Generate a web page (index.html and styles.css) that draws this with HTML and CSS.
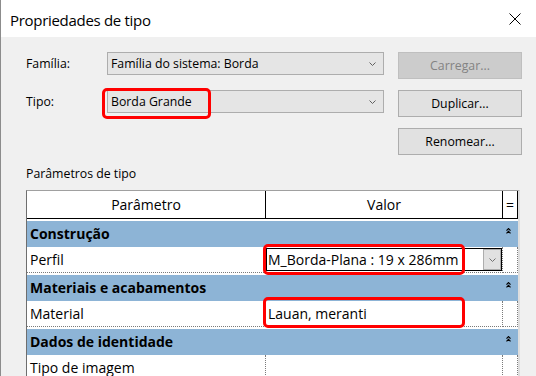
FILE: index.html
```html
<!DOCTYPE html>
<html lang="pt">
<head>
<meta charset="utf-8">
<title>Propriedades de tipo</title>
<link rel="stylesheet" href="styles.css">
</head>
<body>
<div class="window">
  <div class="titlebar">
    <span class="title">Propriedades de tipo</span>
    <svg class="close" width="12" height="12" viewBox="0 0 12 12"><path d="M0.5 0.5 L11.5 11.5 M11.5 0.5 L0.5 11.5" stroke="#000" stroke-width="1" fill="none"/></svg>
  </div>
  <div class="content">
    <div class="form">
      <div class="label">Família:</div>
      <div class="combo"><span>Família do sistema: Borda</span><svg class="chev" width="7" height="4" viewBox="0 0 7 4"><path d="M0.5 0.5 L3.5 3.5 L6.5 0.5" stroke="#606060" stroke-width="1" fill="none"/></svg></div>
      <button class="btn disabled">Carregar...</button>

      <div class="label">Tipo:</div>
      <div class="combo"><span>Borda Grande</span><svg class="chev" width="7" height="4" viewBox="0 0 7 4"><path d="M0.5 0.5 L3.5 3.5 L6.5 0.5" stroke="#606060" stroke-width="1" fill="none"/></svg><div class="mark mark-tipo"></div></div>
      <button class="btn">Duplicar...</button>

      <div class="spacer"></div>
      <div class="spacer"></div>
      <button class="btn">Renomear...</button>
    </div>

    <div class="section">Parâmetros de tipo</div>

    <div class="grid">
      <div class="hdr">
        <div>Parâmetro</div>
        <div>Valor</div>
        <div>=</div>
      </div>

      <div class="cat"><span>Construção</span><svg width="5" height="6" viewBox="0 0 5 6"><path d="M0.5 2.6 L2.5 0.6 L4.5 2.6 M0.5 5.4 L2.5 3.4 L4.5 5.4" stroke="#000" stroke-width="1.2" fill="none"/></svg></div>
      <div class="row">
        <div class="cell name">Perfil</div>
        <div class="cell val">
          <div class="vcombo"><span>M_Borda-Plana : 19 x 286mm</span><div class="vbtn"><svg width="7" height="4" viewBox="0 0 7 4"><path d="M0.5 0.5 L3.5 3.5 L6.5 0.5" stroke="#707070" stroke-width="1" fill="none"/></svg></div></div>
          <div class="mark mark-perfil"></div>
        </div>
        <div class="cell eq"></div>
      </div>

      <div class="cat"><span>Materiais e acabamentos</span><svg width="5" height="6" viewBox="0 0 5 6"><path d="M0.5 2.6 L2.5 0.6 L4.5 2.6 M0.5 5.4 L2.5 3.4 L4.5 5.4" stroke="#000" stroke-width="1.2" fill="none"/></svg></div>
      <div class="row">
        <div class="cell name">Material</div>
        <div class="cell val text">Lauan, meranti<div class="mark mark-material"></div></div>
        <div class="cell eq"></div>
      </div>

      <div class="cat"><span>Dados de identidade</span><svg width="5" height="6" viewBox="0 0 5 6"><path d="M0.5 2.6 L2.5 0.6 L4.5 2.6 M0.5 5.4 L2.5 3.4 L4.5 5.4" stroke="#000" stroke-width="1.2" fill="none"/></svg></div>
      <div class="row">
        <div class="cell name">Tipo de imagem</div>
        <div class="cell val text"></div>
        <div class="cell eq"></div>
      </div>
    </div>
  </div>
</div>
</body>
</html>
```

FILE: styles.css
```css
html, body {
  margin: 0;
  padding: 0;
  background: #f0f0f0;
}

body {
  font-family: "Open Sans", "Noto Sans", "DejaVu Sans", sans-serif;
  color: #000;
}

.window {
  width: 536px;
  height: 376px;
  box-sizing: border-box;
  border-left: 1px solid #8c8c8c;
  background: #f0f0f0;
  overflow: hidden;
}

.titlebar {
  height: 37px;
  background: #fff;
  display: flex;
  justify-content: space-between;
  align-items: flex-start;
}

.title {
  font-size: 15px;
  letter-spacing: -0.3px;
  line-height: 20px;
  padding: 10px 0 0 9px;
}

.close {
  margin: 13px 15px 0 0;
}

.content {
  padding: 15px 0 0 25px;
}

.form {
  display: grid;
  grid-template-columns: 67px 277px 124px;
  grid-auto-rows: 27px;
  column-gap: 14px;
  row-gap: 11px;
  font-size: 12.3px;
}

.label {
  line-height: 23px;
}

.combo {
  position: relative;
  height: 23px;
  box-sizing: border-box;
  border: 1px solid #adadad;
  background: #e5e5e5;
  display: flex;
  align-items: center;
  padding-left: 3px;
  line-height: 21px;
}

.chev {
  margin-left: auto;
  margin-right: 7px;
}

.btn {
  height: 27px;
  box-sizing: border-box;
  border: 1px solid #adadad;
  background: #e1e1e1;
  font-family: inherit;
  font-size: 12.3px;
  color: #000;
  padding: 0;
  margin: 0;
}

.btn.disabled {
  background: #cccccc;
  border-color: #bfbfbf;
  color: #838383;
}

.section {
  font-size: 12.3px;
  line-height: 17px;
  margin-top: 10px;
  margin-bottom: 8px;
}

.grid {
  position: relative;
  width: 491px;
  border-left: 1px solid #6e6e6e;
  border-right: 2px solid #dedede;
  border-top: 1px solid #a0a0a0;
  background: #fff;
  font-size: 14px;
}

.hdr {
  display: grid;
  grid-template-columns: 239px 237px 15px;
  height: 28px;
  box-sizing: border-box;
  border-bottom: 1px solid #000;
}

.hdr > div {
  border-right: 1px solid #000;
  text-align: center;
  line-height: 26px;
  padding-top: 1px;
}

.cat {
  margin-top: 2px;
  height: 26px;
  background: #8db4d6;
  display: flex;
  justify-content: space-between;
  align-items: flex-start;
  font-weight: bold;
  line-height: 26px;
  padding-left: 3px;
}

.cat svg {
  margin: 7px 7px 0 0;
}

.row {
  display: grid;
  grid-template-columns: 239px 237px 15px;
  height: 26px;
}

.cell {
  box-sizing: border-box;
  border-right: 1px dotted #7a7a7a;
  border-bottom: 1px dotted #7a7a7a;
  line-height: 25px;
}

.cell.name {
  padding-left: 3px;
}

.cell.val {
  position: relative;
}

.cell.val.text {
  padding-left: 2px;
}

.vcombo {
  margin-top: 1px;
  height: 23px;
  box-sizing: border-box;
  border: 1px solid #000;
  background: #fff;
  display: flex;
  align-items: stretch;
  line-height: 21px;
  padding-left: 1px;
}

.vbtn {
  margin-left: auto;
  width: 18px;
  box-sizing: border-box;
  border: 1px solid #adadad;
  background: #e1e1e1;
  display: flex;
  align-items: center;
  justify-content: center;
}

.mark {
  position: absolute;
  box-sizing: border-box;
  border: 3px solid #ff0000;
  border-radius: 5px;
  z-index: 2;
  pointer-events: none;
}

.mark-tipo {
  left: -6px;
  top: -3px;
  width: 109px;
  height: 31px;
}

.mark-perfil {
  left: -3px;
  top: -3px;
  width: 202px;
  height: 31px;
}

.mark-material {
  left: -3px;
  top: -4px;
  width: 202px;
  height: 31px;
}
```
